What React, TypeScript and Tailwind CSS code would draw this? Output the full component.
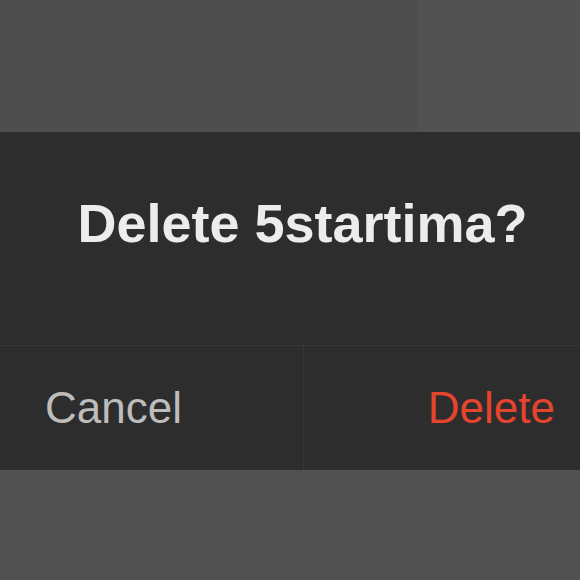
import React from 'react';

export default function App() {
  return (
    <div
      className="w-[580px] h-[580px] overflow-hidden flex flex-col bg-[#515151]"
      style={{ fontFamily: '"Liberation Sans", Arial, sans-serif' }}
    >
      <div className="h-[132px] flex shrink-0">
        <div className="w-[418px] bg-[#4e4e4e]" />
        <div className="flex-1 bg-[#525252]" />
      </div>

      <div className="h-[338px] shrink-0 flex flex-col bg-[#2d2d2d]">
        <div className="h-[213px] flex justify-center pl-[25px] pt-[64px]">
          <h2 className="text-[54px] leading-[54px] font-bold text-[#ececec] whitespace-nowrap">
            Delete 5startima?
          </h2>
        </div>
        <div className="flex-1 flex border-t border-[#383838]">
          <button className="w-[304px] flex items-center pl-[45px] text-[44px] text-[#bdbdbd] border-r border-[#383838]">
            Cancel
          </button>
          <button className="flex-1 flex items-center justify-end pr-[25px] text-[44px] text-[#e5442e]">
            Delete
          </button>
        </div>
      </div>

      <div className="flex-1 bg-[#515151]" />
    </div>
  );
}
